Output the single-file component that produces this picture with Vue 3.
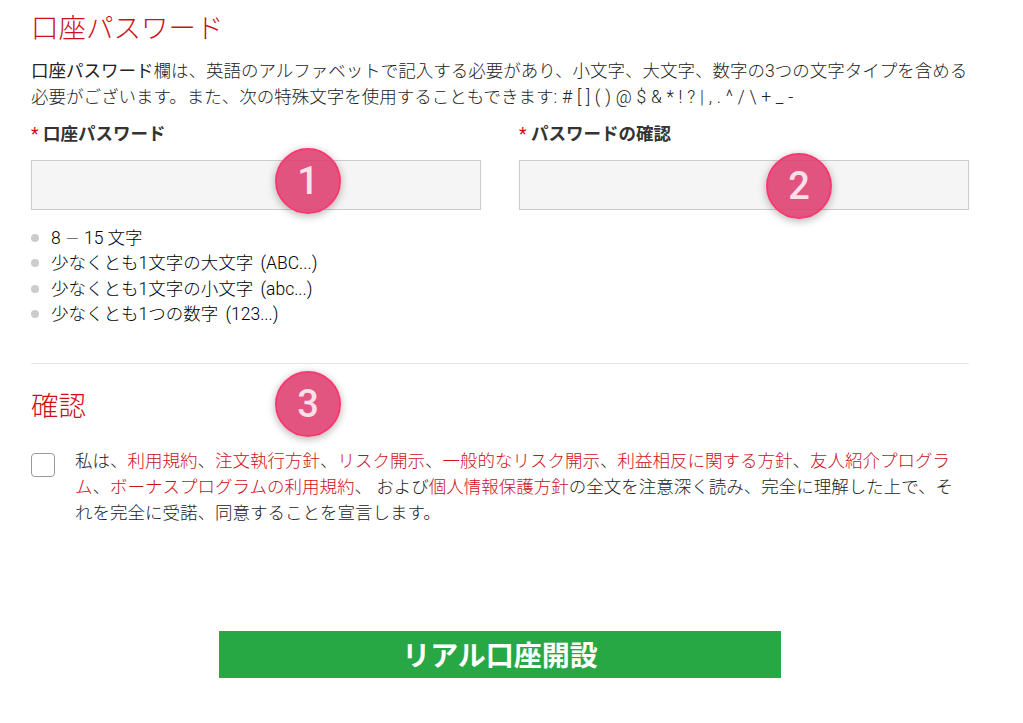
<template>
  <div class="page">
    <h2 class="title">口座パスワード</h2>
    <p class="intro">
      <strong>口座パスワード</strong>欄は、英語のアルファベットで記入する必要があり、小文字、大文字、数字の3つの文字タイプを含める必要がございます。また、次の特殊文字を使用することもできます: # [ ] ( ) @ $ &amp; * ! ? | , . ^ / \ + _ -
    </p>

    <div class="fields">
      <div v-for="field in fields" :key="field.id" class="field">
        <label class="field-label"><span class="req">*</span> {{ field.label }}</label>
        <input class="field-input" type="password" readonly />
        <span class="badge" :class="field.badgeClass">{{ field.id }}</span>
      </div>
    </div>

    <ul class="rules">
      <li>8 <span class="dash">−</span> 15 文字</li>
      <li v-for="rule in rules" :key="rule">{{ rule }}</li>
    </ul>

    <hr class="divider" />

    <div class="confirm-head">
      <h2 class="title confirm-title">確認</h2>
      <span class="badge badge-confirm">3</span>
    </div>

    <div class="agree">
      <span class="check"></span>
      <p class="agree-text">
        私は、<a>利用規約</a>、<a>注文執行方針</a>、<a>リスク開示</a>、<a>一般的なリスク開示</a>、<a>利益相反に関する方針</a>、<a>友人紹介プログラム</a>、<a>ボーナスプログラムの利用規約</a>、 および<a>個人情報保護方針</a>の全文を注意深く読み、完全に理解した上で、それを完全に受諾、同意することを宣言します。
      </p>
    </div>

    <div class="actions">
      <button class="submit" type="button">リアル口座開設</button>
    </div>
  </div>
</template>

<script setup>
const fields = [
  { id: 1, label: '口座パスワード', badgeClass: 'badge-one' },
  { id: 2, label: 'パスワードの確認', badgeClass: 'badge-two' },
];

const rules = [
  '少なくとも1文字の大文字 (ABC...)',
  '少なくとも1文字の小文字 (abc...)',
  '少なくとも1つの数字 (123...)',
];
</script>

<style>
html, body {
  margin: 0;
  background: #fff;
}
</style>

<style scoped>
.page {
  width: 938px;
  margin-left: 31px;
  padding-top: 9px;
  font-family: Roboto, "Noto Sans CJK JP", sans-serif;
  font-size: 17.5px;
  font-weight: 300;
  color: #222;
}

.title {
  margin: 0;
  font-size: 27.5px;
  font-weight: 300;
  line-height: 40px;
  color: #cc0f18;
}

.intro {
  margin: 9px 0 0;
  line-height: 26px;
  word-spacing: 0.5px;
}

.fields {
  display: grid;
  grid-template-columns: 450px 450px;
  column-gap: 38px;
  margin-top: 11px;
}

.field {
  position: relative;
}

.field-label {
  display: block;
  font-weight: 700;
  line-height: 26px;
  margin-bottom: 13px;
  color: #333;
}

.req {
  color: #cc0f18;
  font-weight: 400;
}

.field-input {
  display: block;
  box-sizing: border-box;
  width: 100%;
  height: 50px;
  background: #f5f5f5;
  border: 1px solid #ccc;
  padding: 0 10px;
}

.badge {
  position: absolute;
  box-sizing: border-box;
  width: 66px;
  height: 66px;
  border-radius: 50%;
  border: 2px solid #f8386f;
  background: rgba(222, 62, 110, 0.88);
  box-shadow: 0 2px 8px rgba(0, 0, 0, 0.3);
  color: #fbdfe9;
  font-family: Roboto, sans-serif;
  font-size: 38px;
  font-weight: 500;
  line-height: 62px;
  text-align: center;
}

.badge-one {
  left: 244px;
  top: 27px;
}

.badge-two {
  left: 247px;
  top: 32px;
}

.badge-confirm {
  left: 244px;
  top: -16px;
}

.rules {
  list-style: none;
  margin: 16px 0 0;
  padding: 0;
}

.rules li {
  position: relative;
  padding-left: 20px;
  line-height: 25.4px;
  word-spacing: 3px;
  color: #000;
}

.rules li:first-child {
  word-spacing: 0;
}

.rules li::before {
  content: '';
  position: absolute;
  left: 0;
  top: 8px;
  width: 8px;
  height: 8px;
  border-radius: 50%;
  background: #ccc;
}

.dash {
  font-family: "DejaVu Sans", sans-serif;
}

.divider {
  border: 0;
  border-top: 1px solid #e5e5e5;
  margin: 35px 0 0;
}

.confirm-head {
  position: relative;
  margin-top: 23px;
}

.agree {
  display: flex;
  align-items: flex-start;
  gap: 20px;
  margin-top: 26px;
}

.check {
  flex: none;
  box-sizing: border-box;
  width: 24px;
  height: 24px;
  border: 1px solid #999;
  border-radius: 4px;
  background: #fff;
}

.agree-text {
  margin: -5px 0 0;
  line-height: 26.4px;
}

.agree-text a {
  color: #cc0f18;
}

.actions {
  display: flex;
  justify-content: center;
  margin-top: 104px;
}

.submit {
  width: 562px;
  height: 47px;
  border: 0;
  padding: 0;
  background: #28a745;
  color: #fff;
  font-family: Roboto, "Noto Sans CJK JP", sans-serif;
  font-size: 28px;
  font-weight: 700;
}
</style>
